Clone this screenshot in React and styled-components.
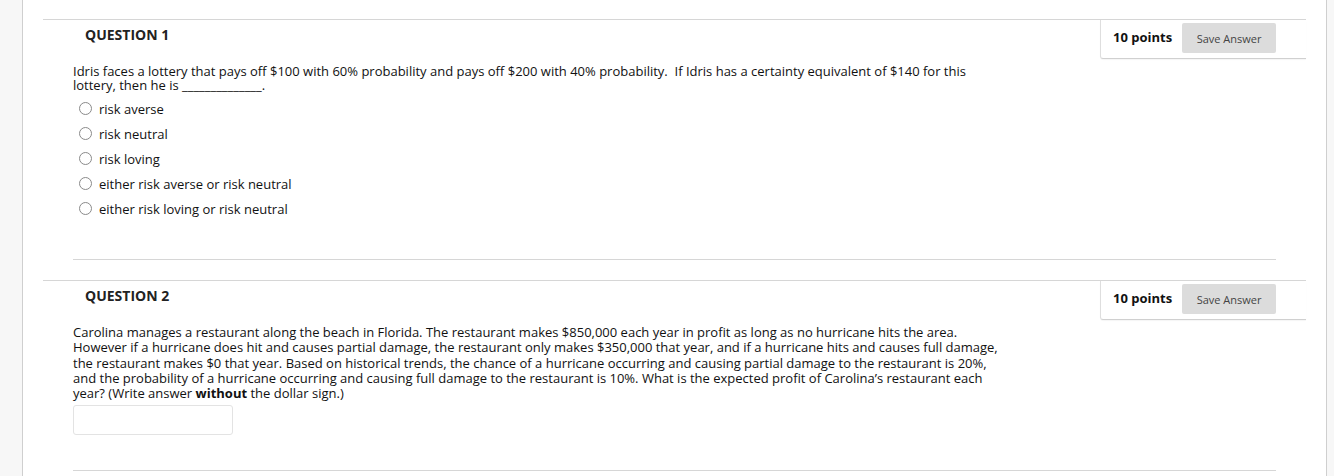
import React from "react";
import styled, { createGlobalStyle } from "styled-components";

const GlobalStyle = createGlobalStyle`
  html, body {
    margin: 0;
    padding: 0;
    background: #f7f7f7;
  }
  body {
    font-family: "Open Sans", "Liberation Sans", sans-serif;
    color: #111;
  }
`;

const Page = styled.div`
  display: flex;
  height: 476px;
  overflow: hidden;
`;

const Gutter = styled.div`
  width: ${(p) => p.$width}px;
  flex-shrink: 0;
  background: #f7f7f7;
  border-${(p) => p.$side}: 1px solid #cfcfcf;
`;

const Main = styled.main`
  flex: 1;
  background: #fff;
  padding: 19px 20px 0 20px;
`;

const Question = styled.section`
  border-top: 1px solid #d6d6d6;
  margin-bottom: 20px;
`;

const Header = styled.div`
  display: flex;
  justify-content: space-between;
  align-items: flex-start;
`;

const Title = styled.h3`
  margin: 6px 0 0 42px;
  font-size: 14px;
  font-weight: 700;
  line-height: 17px;
  color: #222;
`;

const PointsBox = styled.div`
  display: flex;
  align-items: flex-start;
  gap: 10px;
  width: 206px;
  height: 39px;
  box-sizing: border-box;
  padding: 3px 30px 0 12px;
  border-left: 1px solid #dedede;
  border-bottom: 1px solid #d0d0d0;
  border-bottom-left-radius: 3px;
  box-shadow: 0 1px 1px rgba(0, 0, 0, 0.04);
`;

const Points = styled.span`
  font-size: 13px;
  font-weight: 700;
  line-height: 29px;
  color: #111;
  white-space: nowrap;
`;

const SaveButton = styled.button`
  width: 95px;
  height: 30px;
  border: none;
  border-radius: 2px;
  background: #dcdcdc;
  color: #444;
  font-family: "Open Sans", "Liberation Sans", sans-serif;
  font-size: 11px;
  padding: 0;
`;

const Content = styled.div`
  margin: 0 30px;
  padding-top: ${(p) => p.$top}px;
  padding-bottom: ${(p) => p.$bottom}px;
  border-bottom: 1px solid #d6d6d6;
`;

const Prompt = styled.p`
  margin: 0;
  font-size: 13px;
  line-height: ${(p) => p.$lh}px;
  color: #111;
`;

const Options = styled.ul`
  list-style: none;
  margin: 4px 0 0 0;
  padding: 0 0 0 6px;
`;

const Option = styled.li`
  display: flex;
  align-items: center;
  height: 25px;
  gap: 7px;
  font-size: 13px;
  color: #111;
`;

const Radio = styled.span`
  width: 11px;
  height: 11px;
  border: 1px solid #8a8a8a;
  border-radius: 50%;
  background: #fff;
  flex-shrink: 0;
`;

const AnswerInput = styled.input`
  display: block;
  width: 160px;
  height: 30px;
  box-sizing: border-box;
  margin-top: 4px;
  border: 1px solid #e3e3e3;
  border-radius: 3px;
  font-family: inherit;
`;

const options = [
  "risk averse",
  "risk neutral",
  "risk loving",
  "either risk averse or risk neutral",
  "either risk loving or risk neutral",
];

const QuestionHeader = ({ number }) => (
  <Header>
    <Title>QUESTION {number}</Title>
    <PointsBox>
      <Points>10 points</Points>
      <SaveButton type="button">Save Answer</SaveButton>
    </PointsBox>
  </Header>
);

const App = () => {
  return (
    <>
      <GlobalStyle />
      <Page>
        <Gutter $width={22} $side="right" />
        <Main>
          <Question>
            <QuestionHeader number={1} />
            <Content $top={5} $bottom={38}>
              <Prompt $lh={14}>
                Idris faces a lottery that pays off $100 with 60% probability and pays off $200 with
                40% probability.&nbsp; If Idris has a certainty equivalent of $140 for this
                <br />
                lottery, then he is ______________.
              </Prompt>
              <Options>
                {options.map((o) => (
                  <Option key={o}>
                    <Radio />
                    {o}
                  </Option>
                ))}
              </Options>
            </Content>
          </Question>
          <Question>
            <QuestionHeader number={2} />
            <Content $top={5} $bottom={35}>
              <Prompt $lh={15.3}>
                Carolina manages a restaurant along the beach in Florida. The restaurant makes
                $850,000 each year in profit as long as no hurricane hits the area.
                <br />
                However if a hurricane does hit and causes partial damage, the restaurant only makes
                $350,000 that year, and if a hurricane hits and causes full damage,
                <br />
                the restaurant makes $0 that year. Based on historical trends, the chance of a
                hurricane occurring and causing partial damage to the restaurant is 20%,
                <br />
                and the probability of a hurricane occurring and causing full damage to the
                restaurant is 10%. What is the expected profit of Carolina’s restaurant each
                <br />
                year? (Write answer <b>without</b> the dollar sign.)
              </Prompt>
              <AnswerInput type="text" />
            </Content>
          </Question>
        </Main>
        <Gutter $width={7} $side="left" />
      </Page>
    </>
  );
};

export default App;
